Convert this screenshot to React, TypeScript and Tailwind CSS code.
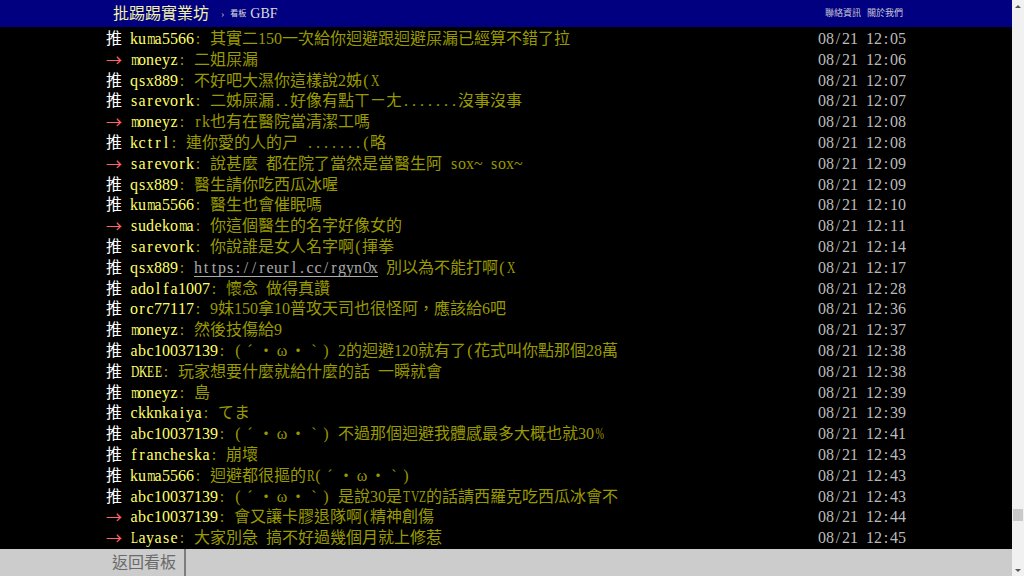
import React from 'react';
import clsx from 'clsx';

type Seg = { text: string; link?: boolean };
type Push = { tag: '推' | '→'; user: string; content: Seg[]; time: string };

const emo = '(ˊ・ω・ˋ)';

const pushes: Push[] = [
  { tag: '推', user: 'kuma5566', content: [{ text: '其實二150一次給你迴避跟迴避屎漏已經算不錯了拉' }], time: '08/21 12:05' },
  { tag: '→', user: 'moneyz', content: [{ text: '二姐屎漏' }], time: '08/21 12:06' },
  { tag: '推', user: 'qsx889', content: [{ text: '不好吧大濕你這樣說2姊(X' }], time: '08/21 12:07' },
  { tag: '推', user: 'sarevork', content: [{ text: '二姊屎漏..好像有點ㄒㄧㄤ.......沒事沒事' }], time: '08/21 12:07' },
  { tag: '→', user: 'moneyz', content: [{ text: 'rk也有在醫院當清潔工嗎' }], time: '08/21 12:08' },
  { tag: '推', user: 'kctrl', content: [{ text: '連你愛的人的ㄕ .......(略' }], time: '08/21 12:08' },
  { tag: '→', user: 'sarevork', content: [{ text: '說甚麼 都在院了當然是當醫生阿 sox~ sox~' }], time: '08/21 12:09' },
  { tag: '推', user: 'qsx889', content: [{ text: '醫生請你吃西瓜冰喔' }], time: '08/21 12:09' },
  { tag: '推', user: 'kuma5566', content: [{ text: '醫生也會催眠嗎' }], time: '08/21 12:10' },
  { tag: '→', user: 'sudekoma', content: [{ text: '你這個醫生的名字好像女的' }], time: '08/21 12:11' },
  { tag: '推', user: 'sarevork', content: [{ text: '你說誰是女人名字啊(揮拳' }], time: '08/21 12:14' },
  { tag: '推', user: 'qsx889', content: [{ text: 'https://reurl.cc/rgynOx', link: true }, { text: ' 別以為不能打啊(X' }], time: '08/21 12:17' },
  { tag: '推', user: 'adolfa1007', content: [{ text: '懷念 做得真讚' }], time: '08/21 12:28' },
  { tag: '推', user: 'orc77117', content: [{ text: '9妹150拿10普攻天司也很怪阿，應該給6吧' }], time: '08/21 12:36' },
  { tag: '推', user: 'moneyz', content: [{ text: '然後技傷給9' }], time: '08/21 12:37' },
  { tag: '推', user: 'abc10037139', content: [{ text: emo + ' 2的迴避120就有了(花式叫你點那個28萬' }], time: '08/21 12:38' },
  { tag: '推', user: 'DKEE', content: [{ text: '玩家想要什麼就給什麼的話 一瞬就會' }], time: '08/21 12:38' },
  { tag: '推', user: 'moneyz', content: [{ text: '島' }], time: '08/21 12:39' },
  { tag: '推', user: 'ckknkaiya', content: [{ text: 'てま' }], time: '08/21 12:39' },
  { tag: '推', user: 'abc10037139', content: [{ text: emo + ' 不過那個迴避我體感最多大概也就30%' }], time: '08/21 12:41' },
  { tag: '推', user: 'francheska', content: [{ text: '崩壞' }], time: '08/21 12:43' },
  { tag: '推', user: 'kuma5566', content: [{ text: '迴避都很摳的R' + emo }], time: '08/21 12:43' },
  { tag: '推', user: 'abc10037139', content: [{ text: emo + ' 是說30是TVZ的話請西羅克吃西瓜冰會不' }], time: '08/21 12:43' },
  { tag: '→', user: 'abc10037139', content: [{ text: '會又讓卡膠退隊啊(精神創傷' }], time: '08/21 12:44' },
  { tag: '→', user: 'Layase', content: [{ text: '大家別急 搞不好過幾個月就上修惹' }], time: '08/21 12:45' },
];

// terminal-like grid: half-width chars take 8px, full-width 16px
const squeezeOf = (c: string) => {
  if (c === 'm') return 'scale-x-[0.66]';
  if (c === 'w') return 'scale-x-[0.7]';
  if (c === 'M') return 'scale-x-[0.56]';
  if (c === 'W') return 'scale-x-[0.54]';
  if (c === '%') return 'scale-x-[0.64]';
  if (c >= 'A' && c <= 'Z') return 'scale-x-[0.72]';
  return '';
};

const Cells: React.FC<{ text: string }> = ({ text }) => (
  <>
    {Array.from(text).map((c, i) => (
      <span
        key={i}
        className={clsx(
          'inline-block text-center',
          c.charCodeAt(0) > 0x7f ? 'w-[16px]' : 'w-[8px]',
          c === '→' && "-translate-y-[1px] align-top font-['Noto_Sans_CJK_TC']",
          squeezeOf(c)
        )}
      >
        {c}
      </span>
    ))}
  </>
);

const PushRow: React.FC<{ p: Push }> = ({ p }) => (
  <div className="flex h-[20.8px] justify-between whitespace-pre">
    <div>
      <span className={p.tag === '推' ? 'text-white' : 'text-[#f66]'}>
        <Cells text={p.tag + ' '} />
      </span>
      <span className="text-[#ff6]">
        <Cells text={p.user} />
      </span>
      <span className="text-[#990]">
        <Cells text=": " />
        {p.content.map((s, i) =>
          s.link ? (
            <span key={i} className="border-b border-[#aaa] text-[#aaa]">
              <Cells text={s.text} />
            </span>
          ) : (
            <Cells key={i} text={s.text} />
          )
        )}
      </span>
    </div>
    <span className="text-[#bbb]">
      <Cells text={p.time} />
    </span>
  </div>
);

const App: React.FC = () => {
  return (
    <div className="flex h-[576px] w-[1024px] overflow-hidden bg-black font-['Liberation_Serif','Noto_Sans_CJK_TC',serif]">
      <div className="flex min-w-0 flex-1 flex-col">
        <header className="h-[27px] shrink-0 bg-[#000080]">
          <div className="mx-auto flex h-full w-[800px] items-center justify-between">
            <div className="ml-[7px] flex items-center">
              <span className="text-[16px] leading-none text-[#f2f2a6]">批踢踢實業坊</span>
              <span className="ml-[12px] text-[10px] text-[#bbb]">›</span>
              <span className="ml-[6px] text-[8px] text-[#ddd]">看板</span>
              <span className="ml-[4px] text-[14px] leading-none text-[#ddd]">GBF</span>
            </div>
            <div className="mr-[3px] flex gap-[6px] text-[9px] text-[#c8c8d8]">
              <span>聯絡資訊</span>
              <span>關於我們</span>
            </div>
          </div>
        </header>

        <main className="flex-1 overflow-hidden pt-[2px]">
          <div className="mx-auto w-[800px] text-[16px] leading-[20.8px]">
            {pushes.map((p, i) => (
              <PushRow key={i} p={p} />
            ))}
          </div>
        </main>

        <footer className="flex h-[27px] shrink-0 bg-[#cccccc]">
          <div className="flex w-[186px] items-center justify-end border-r-2 border-[#7c7c7c] pr-[8px] text-[16px] text-[#6a6a6a]">
            返回看板
          </div>
        </footer>
      </div>

      {/* scrollbar */}
      <div className="flex w-[12px] shrink-0 flex-col items-center bg-[#f1f1f1]">
        <div className="flex h-[12px] items-center justify-center">
          <div className="h-0 w-0 border-x-[3px] border-b-[3px] border-x-transparent border-b-[#555]" />
        </div>
        <div className="h-[497px]" />
        <div className="h-[12px] w-[10px] bg-[#c9c9c9]" />
        <div className="flex-1" />
        <div className="flex h-[12px] items-center justify-center">
          <div className="h-0 w-0 border-x-[3px] border-t-[3px] border-x-transparent border-t-[#555]" />
        </div>
      </div>
    </div>
  );
};

export default App;
